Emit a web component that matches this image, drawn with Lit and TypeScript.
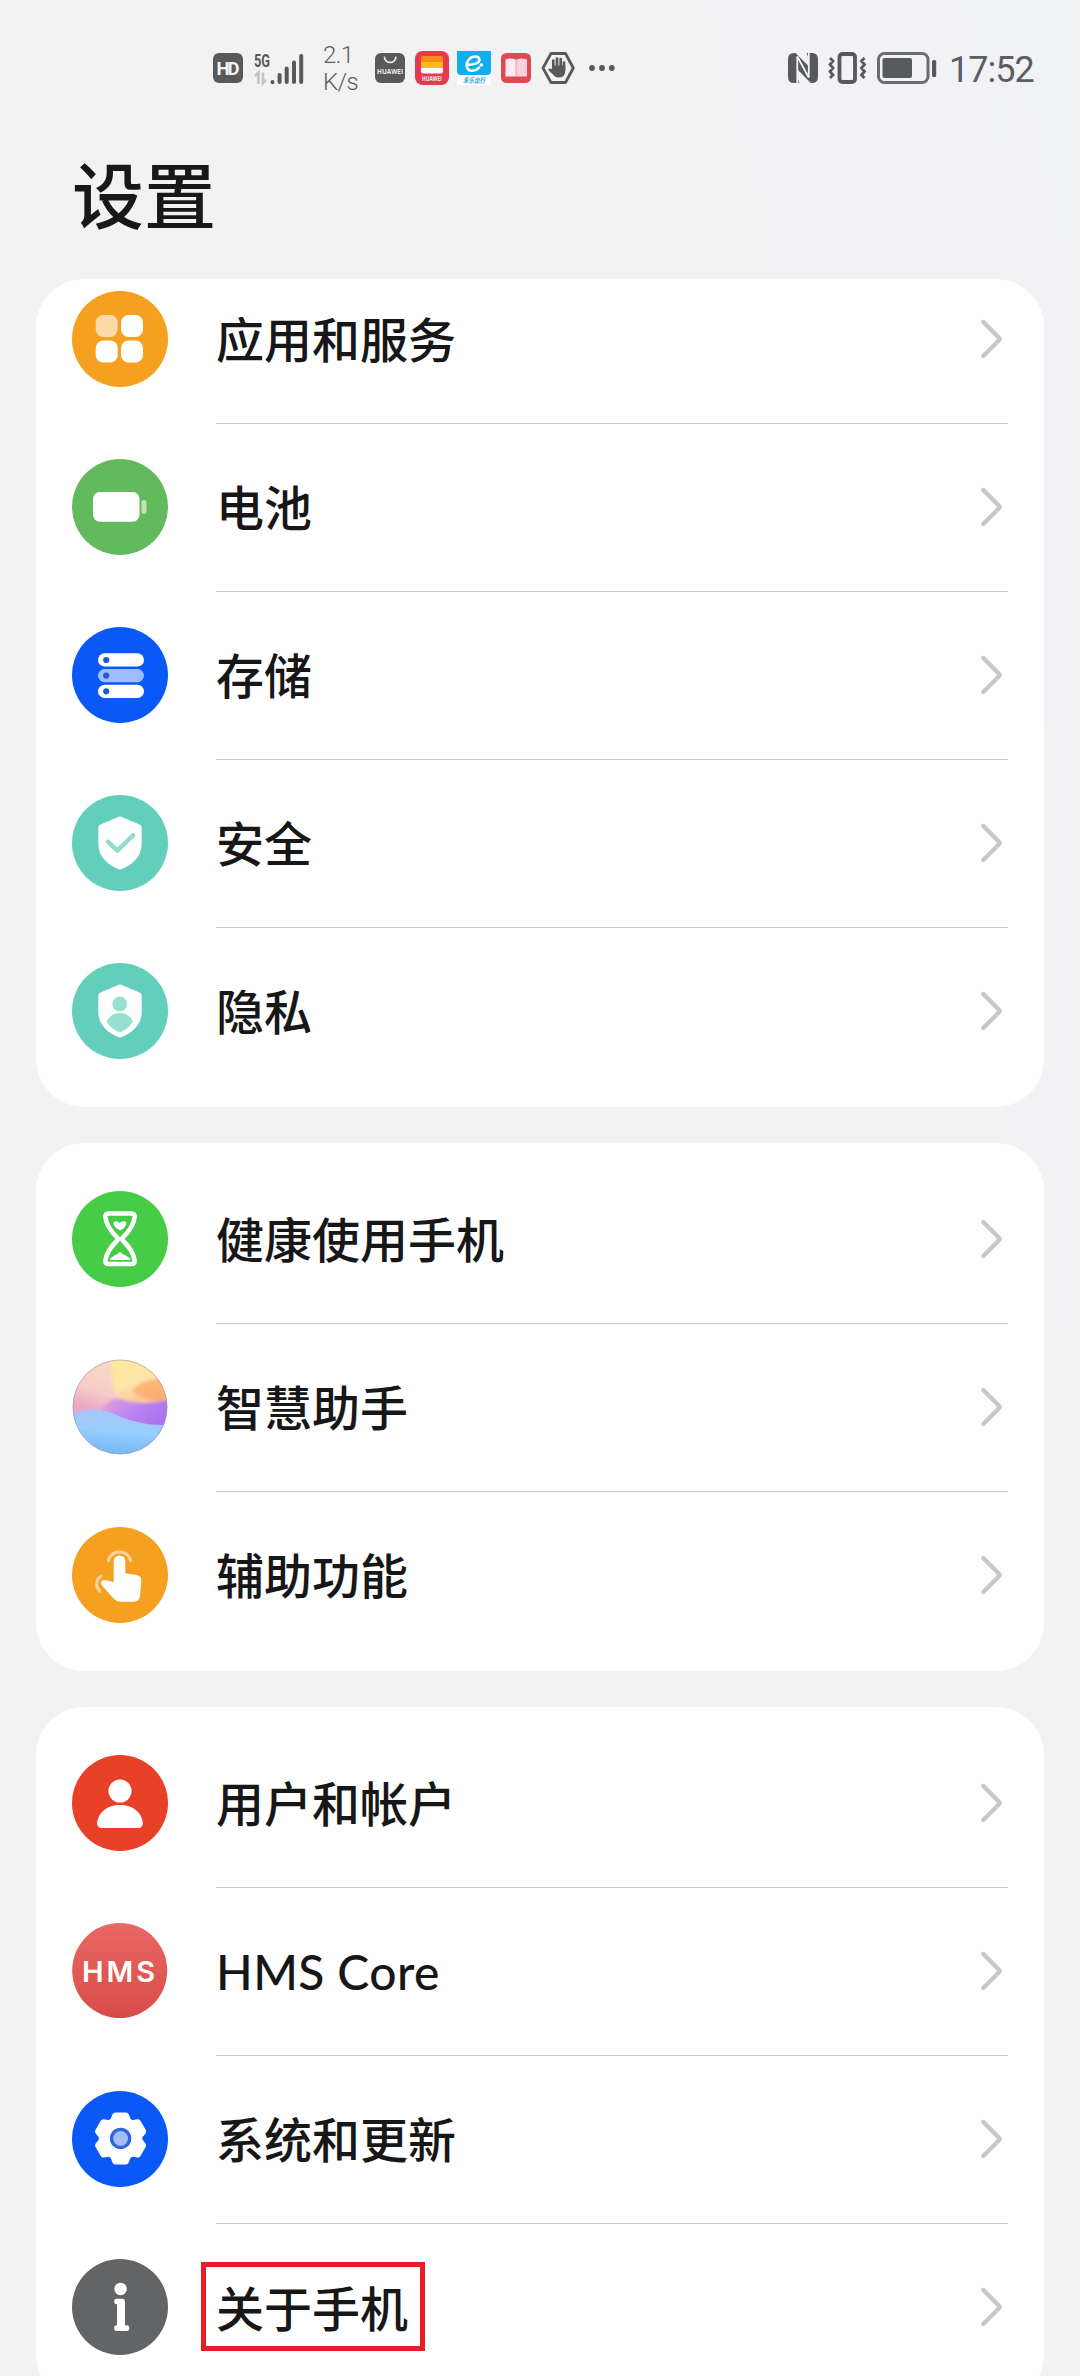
import { LitElement, html, svg, css } from "lit";
import { customElement, property } from "lit/decorators.js";

const shield =
  "M48 21.3L67.5 29.6Q69.7 30.6 69.7 33V49C69.7 61 61 70 48 74.8C35 70 26.3 61 26.3 49V33Q26.3 30.6 28.5 29.6Z";

// Six-toothed cog outline centred on (cx, cy).
const cog = (cx: number, cy: number) => {
  const pts: string[] = [];
  const add = (deg: number, r: number) => {
    const a = (deg * Math.PI) / 180;
    pts.push(`${(cx + r * Math.sin(a)).toFixed(2)},${(cy - r * Math.cos(a)).toFixed(2)}`);
  };
  for (let i = 0; i < 6; i++) {
    add(i * 60 - 13, 23.6);
    add(i * 60 + 13, 23.6);
    add(i * 60 + 23, 19);
    add(i * 60 + 37, 19);
  }
  return pts.join(" ");
};

const disc = (fill: string) => svg`<circle cx="48" cy="48" r="48" fill=${fill}/>`;

const icons: Record<string, unknown> = {
  apps: svg`${disc("#f6a01f")}
    <g fill="#fff"><rect x="23.7" y="24" width="22" height="22" rx="7.5" opacity=".62"/>
    <rect x="49" y="24" width="22" height="22" rx="7.5"/>
    <rect x="23.7" y="49.5" width="22" height="22" rx="7.5"/>
    <rect x="49" y="49.5" width="22" height="22" rx="7.5"/></g>`,
  battery: svg`${disc("#63ba5c")}
    <rect x="21" y="33" width="46.5" height="29.7" rx="7" fill="#fff"/>
    <rect x="69.5" y="41" width="5" height="14" rx="2.2" fill="#fff" opacity=".6"/>`,
  storage: svg`${disc("#0a59f7")}
    <g fill="#fff"><rect x="26" y="26.3" width="46" height="13.2" rx="6.6"/>
    <rect x="26" y="42" width="46" height="13.2" rx="6.6" opacity=".6"/>
    <rect x="26" y="57.7" width="46" height="13.2" rx="6.6"/></g>
    <g fill="#2457cf"><circle cx="34.2" cy="33" r="3.1"/><circle cx="34.2" cy="48.6" r="3.1"/><circle cx="34.2" cy="64.3" r="3.1"/></g>`,
  security: svg`${disc("#63cfbb")}<path d=${shield} fill="#fff"/>
    <path d="M36 46.7L45.4 55.6L61 40.2" fill="none" stroke="#8fdccc" stroke-width="4.4" stroke-linecap="round" stroke-linejoin="round"/>`,
  privacy: svg`${disc("#63cfbb")}<path d=${shield} fill="#fff"/>
    <g fill="#97dfd0"><circle cx="47.7" cy="41" r="7.4"/>
    <path d="M34.5 58C38 52.5 42 50 47.8 50S57.500 52.500 61 58C58 63.500 54 67 47.800 69.300C41.500 67 37.500 63.500 34.500 58Z"/></g>`,
  health: svg`${disc("#47cc47")}
    <path d="M36.500 22.500H59.500Q63.300 22.500 62.600 26.500C61.500 34 58 39.500 50.800 46.500Q49.500 48 50.800 49.500C58 56.500 61.500 62 62.600 69Q63.300 73 59.500 73H36.500Q32.700 73 33.400 69C34.500 62 38 56.500 45.200 49.500Q46.500 48 45.200 46.500C38 39.500 34.500 34 33.400 26.500Q32.700 22.500 36.500 22.500Z" fill="none" stroke="#fff" stroke-width="4.600"/>
    <path d="M48 39.600C44 37.500 41.500 35 41.500 32.600C41.500 30 45 29.400 47.500 32C50 30 54.300 29 54.300 32.300C54.300 35 51 38.500 48 39.600Z" fill="#fff"/>
    <path d="M38 69C39 65.500 43 65 48 61C53 65 57.500 65.500 58.600 69Z" fill="#fff"/>`,
  assistant: svg`
    <defs>
      <clipPath id="orb"><circle cx="48" cy="48" r="47.200"/></clipPath>
      <linearGradient id="oPink" x1=".6" y1="0" x2=".3" y2="1"><stop offset="0" stop-color="#fbdcc4"/><stop offset=".4" stop-color="#f6cbc9"/><stop offset=".6" stop-color="#eda5c6"/><stop offset="1" stop-color="#ea9ccb"/></linearGradient>
      <linearGradient id="oSun" x1=".3" y1="0" x2=".7" y2="1"><stop offset="0" stop-color="#fdea9c"/><stop offset=".5" stop-color="#fde3a8"/><stop offset="1" stop-color="#fbb48c"/></linearGradient>
      <linearGradient id="oViolet" x1="0" y1="0" x2="1" y2=".5"><stop offset="0" stop-color="#e7a0da"/><stop offset=".5" stop-color="#b985f0"/><stop offset="1" stop-color="#a96cf2"/></linearGradient>
      <linearGradient id="oSea" x1=".6" y1="0" x2=".45" y2="1"><stop offset="0" stop-color="#adc0fb"/><stop offset=".45" stop-color="#98cffc"/><stop offset="1" stop-color="#72b4fb"/></linearGradient>
      <filter id="soft" x="-20%" y="-20%" width="140%" height="140%"><feGaussianBlur stdDeviation="1.600"/></filter>
    </defs>
    <g clip-path="url(#orb)">
      <rect width="96" height="96" fill="url(#oPink)"/>
      <g filter="url(#soft)">
        <path d="M39 -4H100V48H60C50 42 42 36 40 26Z" fill="url(#oSun)"/>
        <path d="M102 20C84 17 68 22 60 32C70 40 86 44 102 42Z" fill="#fba05c" opacity=".62"/>
        <path d="M30 50C38 40 44 38 50 40.500C64 45 82 46 102 39V76H34Z" fill="url(#oViolet)"/>
      </g>
      <path d="M-2 55C12 49 28 49 40 54C56 61 72 67 98 66V98H-2Z" fill="url(#oSea)"/>
    </g>
    <circle cx="48" cy="48" r="47" fill="none" stroke="#9b93b4" stroke-opacity=".6" stroke-width="1"/>`,
  access: svg`${disc("#f6a01f")}
    <g fill="none" stroke="#fff" stroke-opacity=".55" stroke-width="3.200" stroke-linecap="round">
      <path d="M36.300 33.500A11.500 11.500 0 0 1 58.600 33.500"/><path d="M29 49A9.800 9.800 0 0 0 27.600 64"/></g>
    <path d="M41.700 34.200A5.800 5.800 0 0 1 53.300 34.200V46.300L64.500 48Q69.600 49 69.300 54L68 69Q67.300 74.600 62 74.700H48.500Q44.500 74.700 42 72L30 58.500Q28 55.800 29.600 54.200Q31.500 52.400 35 53.500L41.700 55Z" fill="#fff"/>`,
  users: svg`${disc("#e84127")}
    <circle cx="48" cy="36" r="11.500" fill="#fff"/>
    <path d="M25 68C26.500 57 35 50 48 50S69.500 57 70.800 68Q71 73 66 73H30Q25 73 25 68Z" fill="#fff"/>`,
  hms: svg`
    <defs><linearGradient id="hmsBg" x1="0" y1="0" x2="0" y2="1"><stop offset="0" stop-color="#ea6763"/><stop offset="1" stop-color="#d84c48"/></linearGradient></defs>
    <circle cx="47.700" cy="47.500" r="47.500" fill="url(#hmsBg)"/>
    <text class="hms" x="10" y="59" textLength="73" lengthAdjust="spacing">HMS</text>`,
  system: svg`${disc("#0a59f7")}
    <polygon points=${cog(48.6, 47.4)} fill="#fff" stroke="#fff" stroke-width="6" stroke-linejoin="round"/>
    <circle cx="48.600" cy="47.400" r="10.700" fill="#2e66dc"/><circle cx="48.600" cy="47.400" r="7.400" fill="#a5bdfa"/>`,
  about: svg`${disc("#636466")}
    <circle cx="48.600" cy="30" r="6.200" fill="#fff"/>
    <path d="M44.800 39.700H50Q53 39.700 53 42.700V66.200H54.500A2.900 2.900 0 0 1 54.500 72H45A2.900 2.900 0 0 1 45 66.200V45.300A2.800 2.800 0 0 1 44.800 39.700Z" fill="#fff"/>`,
};

interface Item {
  icon: string;
  label: string;
  marked?: boolean;
}

const groups: Item[][] = [
  [
    { icon: "apps", label: "应用和服务" },
    { icon: "battery", label: "电池" },
    { icon: "storage", label: "存储" },
    { icon: "security", label: "安全" },
    { icon: "privacy", label: "隐私" },
  ],
  [
    { icon: "health", label: "健康使用手机" },
    { icon: "assistant", label: "智慧助手" },
    { icon: "access", label: "辅助功能" },
  ],
  [
    { icon: "users", label: "用户和帐户" },
    { icon: "hms", label: "HMS Core" },
    { icon: "system", label: "系统和更新" },
    { icon: "about", label: "关于手机", marked: true },
  ],
];

@customElement("status-bar")
export class StatusBar extends LitElement {
  static styles = css`
    :host { display: flex; align-items: center; height: 136px; padding: 0 47px 0 213px; box-sizing: border-box; color: #5c5d5f; }
    svg { display: block; flex: none; overflow: visible; }
    .cell { margin-left: 10px; }
    .speed { margin-left: 18px; width: 42px; font: 300 24px/27px Roboto, "Liberation Sans", sans-serif; letter-spacing: -0.600px; transform: translateY(1px); }
    .speed div { white-space: nowrap; }
    .sig { margin-left: 10px; }
    .store { margin-left: 10px; }
    .tight { margin-left: 8px; }
    .dots { margin-left: 13px; }
    .spacer { flex: 1; }
    .time { margin-left: 12px; width: 84px; white-space: nowrap; font: 400 36px/44px Roboto, "Liberation Sans", sans-serif; letter-spacing: -1px; transform: translateY(2px); }
    .hd { font: 700 18.500px Roboto, sans-serif; fill: #f3f3f5; }
    .net { font: 700 18px Roboto, sans-serif; fill: #58595b; }
    .brand { font: 700 7px "Open Sans", sans-serif; fill: #eee; }
    .cn { font: italic 700 7px "Noto Sans CJK SC", sans-serif; fill: #2aaadd; }
  `;
  render() {
    return html`
      <svg width="30" height="30" viewBox="0 0 30 30"><rect width="30" height="30" rx="6" fill="#58595b"/><text class="hd" x="3.500" y="21.500" textLength="23">HD</text></svg>
      <svg class="sig" width="52" height="34" viewBox="0 0 52 34">
        <text class="net" x="1" y="15.500" textLength="16" lengthAdjust="spacingAndGlyphs">5G</text>
        <path d="M2 25L5.500 21.500V33M10 21.500V32L13 29" fill="none" stroke="#c4c4c6" stroke-width="2.600"/>
        <g fill="none" stroke="#58595b" stroke-width="4" stroke-linecap="round"><path d="M19.500 31V31.200M26.600 24V31M33.700 17.500V31M41 11.500V31M48.200 5V31"/></g>
      </svg>
      <div class="speed"><div>2.1</div><div>K/s</div></div>
      <svg class="store" width="30" height="30" viewBox="0 0 30 30"><rect width="30" height="30" rx="6" fill="#58595b"/><path d="M9.500 4.500A5.700 5.700 0 0 0 20.800 4.500" fill="none" stroke="#eee" stroke-width="1.800" stroke-linecap="round"/><text class="brand" x="2" y="20.500" textLength="26" lengthAdjust="spacingAndGlyphs">HUAWEI</text></svg>
      <svg class="cell" width="34" height="34" viewBox="0 0 34 34"><rect width="34" height="34" rx="7.500" fill="#e8394a"/><path d="M8 5H26Q28 5 28 7V11H6V7Q6 5 8 5Z" fill="#fb8c1c"/><rect x="6" y="11" width="22" height="6" fill="#fdbb14"/><path d="M6 17H28V20Q28 22.500 25.500 22.500H8.500Q6 22.500 6 20Z" fill="#fff"/><text class="brand" x="7" y="30" textLength="20" lengthAdjust="spacingAndGlyphs">HUAWEI</text></svg>
      <svg class="tight" width="34" height="34" viewBox="0 0 34 34"><rect width="34" height="34" fill="#fbfdfe"/><path d="M0 0H34V20Q34 24 30 24H4Q0 24 0 20Z" fill="#10aeee"/><path d="M9.500 13.500C16 14.500 23 12 22.500 8.500C21.800 4.500 15.500 4.500 12 8.300C8 12.800 9.500 19.500 14.500 19.800C18 20 20.500 18.300 22 16.500" fill="none" stroke="#fff" stroke-width="2.500" stroke-linecap="round"/><circle cx="24.300" cy="14" r="1.800" fill="#fff"/><text class="cn" x="6" y="31.500" textLength="22" lengthAdjust="spacingAndGlyphs">禾乐出行</text></svg>
      <svg class="cell" width="30" height="30" viewBox="0 0 30 30"><rect width="30" height="30" rx="5.500" fill="#dc4a52"/><path d="M4.500 6.500Q10 4.500 14.800 6.800V23.500H4.500Z" fill="#fdeaf0"/><path d="M26 6.500Q20 4.500 15.200 6.800V23.500H26Z" fill="#fbd0dc"/></svg>
      <svg class="cell" width="34" height="34" viewBox="0 0 34 34"><path d="M10 2.500H24.500L32.300 17L24.500 31.500H10L2 17Z" fill="none" stroke="#58595b" stroke-width="2.800" stroke-linejoin="round"/><path d="M12.300 18V9.500M16 16V7.500M19.700 16V8M23 18V11.500" fill="none" stroke="#58595b" stroke-width="2.700" stroke-linecap="round"/><path d="M11 14.500H24.300V20Q24 26.500 18 26.500Q14 26.500 12 23.500L7 18.800Q8.500 16.500 11 18.300Z" fill="#58595b"/></svg>
      <svg class="dots" width="28" height="8" viewBox="0 0 28 8"><g fill="#58595b"><circle cx="4" cy="4" r="2.900"/><circle cx="14" cy="4" r="2.900"/><circle cx="23.800" cy="4" r="2.900"/></g></svg>
      <div class="spacer"></div>
      <svg width="30" height="30" viewBox="0 0 30 30"><path d="M6 0H7.500L20.500 13V5L18.500 0H24Q30 0 30 6V24Q30 30 24 30H22.800L9.500 16.500V25L11.500 30H6Q0 30 0 24V6Q0 0 6 0Z" fill="#58595b"/><path d="M9.300 30V3.500L20.800 24.500V0" fill="none" stroke="#f2f3f5" stroke-width="1.800"/></svg>
      <svg class="cell" width="39" height="32" viewBox="0 0 39 32"><rect x="11.500" y="2" width="15.500" height="28" rx="3" fill="none" stroke="#58595b" stroke-width="3.800"/><path d="M2 6L5 9L2 12.500L5 16L2 19.500L5 23L2 26M36.500 6L33.500 9L36.500 12.500L33.500 16L36.500 19.500L33.500 23L36.500 26" fill="none" stroke="#58595b" stroke-width="2.800"/></svg>
      <svg class="cell" width="60" height="32" viewBox="0 0 60 32"><rect x="1.500" y="1.500" width="49.500" height="29" rx="6" fill="none" stroke="#6b6c6e" stroke-width="3"/><rect x="5.500" y="6" width="29.500" height="20" rx="2" fill="#58595b"/><rect x="55" y="8" width="4.200" height="17" rx="1.500" fill="#58595b"/></svg>
      <div class="time">17:52</div>
    `;
  }
}

@customElement("setting-row")
export class SettingRow extends LitElement {
  @property({ attribute: false }) item!: Item;
  @property({ type: Boolean }) last = false;
  static styles = css`
    :host { display: flex; height: 168px; padding: 0 36px; box-sizing: border-box; }
    .icon { display: block; width: 96px; height: 96px; margin: 36px 48px 0 0; flex: none; }
    .hms { font: 600 29px Inter, "Liberation Sans", sans-serif; fill: #fff; }
    .body { flex: 1; display: flex; align-items: center; box-sizing: border-box; margin-bottom: -1px; border-bottom: 1px solid #c9c9c9; }
    .plain { border-bottom-color: transparent; }
    .label { flex: 1; padding-bottom: 4px; font: 500 48px/72px "Noto Sans CJK SC", sans-serif; color: #171717; white-space: nowrap; }
    .latin { padding: 2px 0 0 0; font-family: Lato, "Noto Sans CJK SC", sans-serif; letter-spacing: 0.400px; }
    .marked { flex: none; box-sizing: border-box; width: 224px; height: 89px; margin: 0 auto 1px -15px; padding: 0 0 0 10px; border: 5px solid #e61f26; line-height: 79px; }
    .chevron { display: block; flex: none; margin-right: 4px; }
  `;
  render() {
    const { icon, label, marked } = this.item;
    const latin = /^[A-Za-z ]+$/.test(label);
    return html`
      <svg class="icon" viewBox="0 0 96 96">${icons[icon]}</svg>
      <div class="body ${this.last ? "plain" : ""}">
        <div class="label ${latin ? "latin" : ""} ${marked ? "marked" : ""}">${label}</div>
        <svg class="chevron" width="24" height="42" viewBox="0 0 24 42">
          <path d="M3.300 4L19 19.700Q20.300 21 19 22.300L3.300 38" fill="none" stroke="#c8c8c8" stroke-width="4.400" stroke-linecap="round" />
        </svg>
      </div>
    `;
  }
}

@customElement("app-root")
export class AppRoot extends LitElement {
  static styles = css`
    :host { display: flex; flex-direction: column; height: 2376px; overflow: hidden; background: linear-gradient(75deg, #f2f2f2 0%, #f2f2f2 65%, #f1f2f6 100%); }
    .title { margin: 0; height: 143px; padding: 4px 72px 0; box-sizing: border-box; font: 500 72px/104px "Noto Sans CJK SC", sans-serif; color: #17181a; }
    .list { flex: 1; min-height: 0; display: flex; flex-direction: column; gap: 36px; padding: 0 36px; overflow: hidden; }
    .card { flex: none; padding: 12px 0; border-radius: 48px; background: #fefefe; overflow: hidden; }
    .scrolled { padding-top: 0; }
    .scrolled setting-row:first-child { margin-top: -24px; }
  `;
  render() {
    return html`
      <status-bar></status-bar>
      <h1 class="title">设置</h1>
      <div class="list">
        ${groups.map(
          (g, gi) => html`<div class="card ${gi === 0 ? "scrolled" : ""}">
            ${g.map((it, i) => html`<setting-row .item=${it} ?last=${i === g.length - 1}></setting-row>`)}
          </div>`
        )}
      </div>
    `;
  }
}
